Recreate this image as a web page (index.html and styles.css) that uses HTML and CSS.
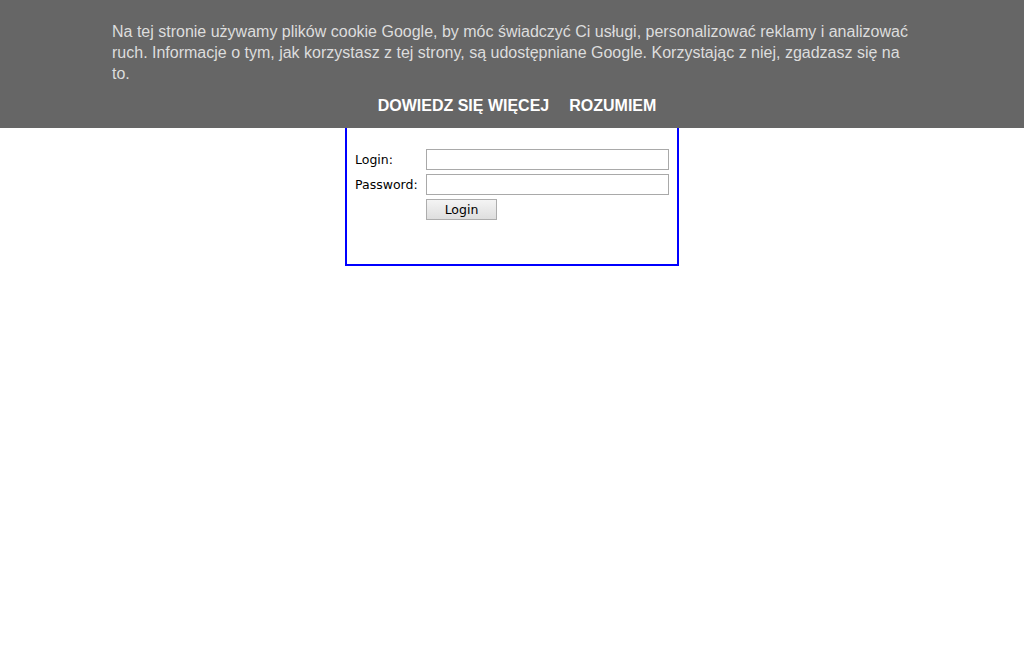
FILE: index.html
```html
<!DOCTYPE html>
<html lang="pl">
<head>
<meta charset="utf-8">
<title>Login</title>
<link rel="stylesheet" href="styles.css">
</head>
<body>
<div class="page">
  <form class="login-box">
    <div class="login-grid">
      <label class="lbl" for="login">Login:</label>
      <input class="field" id="login" type="text">
      <label class="lbl" for="pass">Password:</label>
      <input class="field" id="pass" type="password">
      <span></span>
      <button class="btn" type="button">Login</button>
    </div>
  </form>
</div>
<div class="cookie-bar">
  <div class="cookie-inner">
    <p class="cookie-text">Na tej stronie używamy plików cookie Google, by móc świadczyć Ci usługi, personalizować reklamy i analizować ruch. Informacje o tym, jak korzystasz z tej strony, są udostępniane Google. Korzystając z niej, zgadzasz się na to.</p>
    <div class="cookie-buttons">
      <a class="cookie-btn">Dowiedz się więcej</a>
      <a class="cookie-btn">Rozumiem</a>
    </div>
  </div>
</div>
</body>
</html>
```
FILE: styles.css
```css
html, body {
  margin: 0;
  padding: 0;
  background: #fff;
}
body {
  font-family: "DejaVu Sans", Verdana, sans-serif;
  font-size: 12px;
  color: #000;
}
.page {
  display: flex;
  justify-content: center;
  padding-top: 20px;
}
.login-box {
  width: 314px;
  border: 2px solid #0000ff;
  padding: 127px 8px 44px 8px;
  margin: 0;
}
.login-grid {
  display: grid;
  grid-template-columns: 69px 243px;
  column-gap: 2px;
  row-gap: 4px;
  align-items: center;
}
.lbl {
  font-size: 12.5px;
  line-height: 15px;
  white-space: nowrap;
  padding-left: 0;
}
.field {
  box-sizing: border-box;
  width: 243px;
  height: 21px;
  margin: 0;
  border: 1px solid #a9a9a9;
  background: #fff;
  padding: 0 2px;
  font-family: "DejaVu Sans", sans-serif;
  font-size: 12px;
  outline: none;
}
.btn {
  box-sizing: border-box;
  width: 71px;
  height: 21px;
  margin: 0;
  padding: 0;
  border: 1px solid #adadad;
  border-radius: 0;
  background: linear-gradient(#f4f4f4, #dedede);
  font-family: "DejaVu Sans", sans-serif;
  font-size: 12.5px;
  color: #000;
  line-height: 18px;
}
.cookie-bar {
  position: fixed;
  top: 0;
  left: 0;
  right: 0;
  background: #666666;
  z-index: 10;
}
.cookie-inner {
  width: 800px;
  margin: 0 auto;
  padding: 21px 0 12px 0;
  font-family: "Liberation Sans", Arial, sans-serif;
  font-size: 16px;
  line-height: 21px;
}
.cookie-text {
  margin: 0 0 11px 0;
  color: #dddddd;
}
.cookie-buttons {
  display: flex;
  justify-content: center;
  gap: 20px;
  padding-left: 10px;
}
.cookie-btn {
  color: #ffffff;
  font-weight: bold;
  text-transform: uppercase;
  text-decoration: none;
}
```
